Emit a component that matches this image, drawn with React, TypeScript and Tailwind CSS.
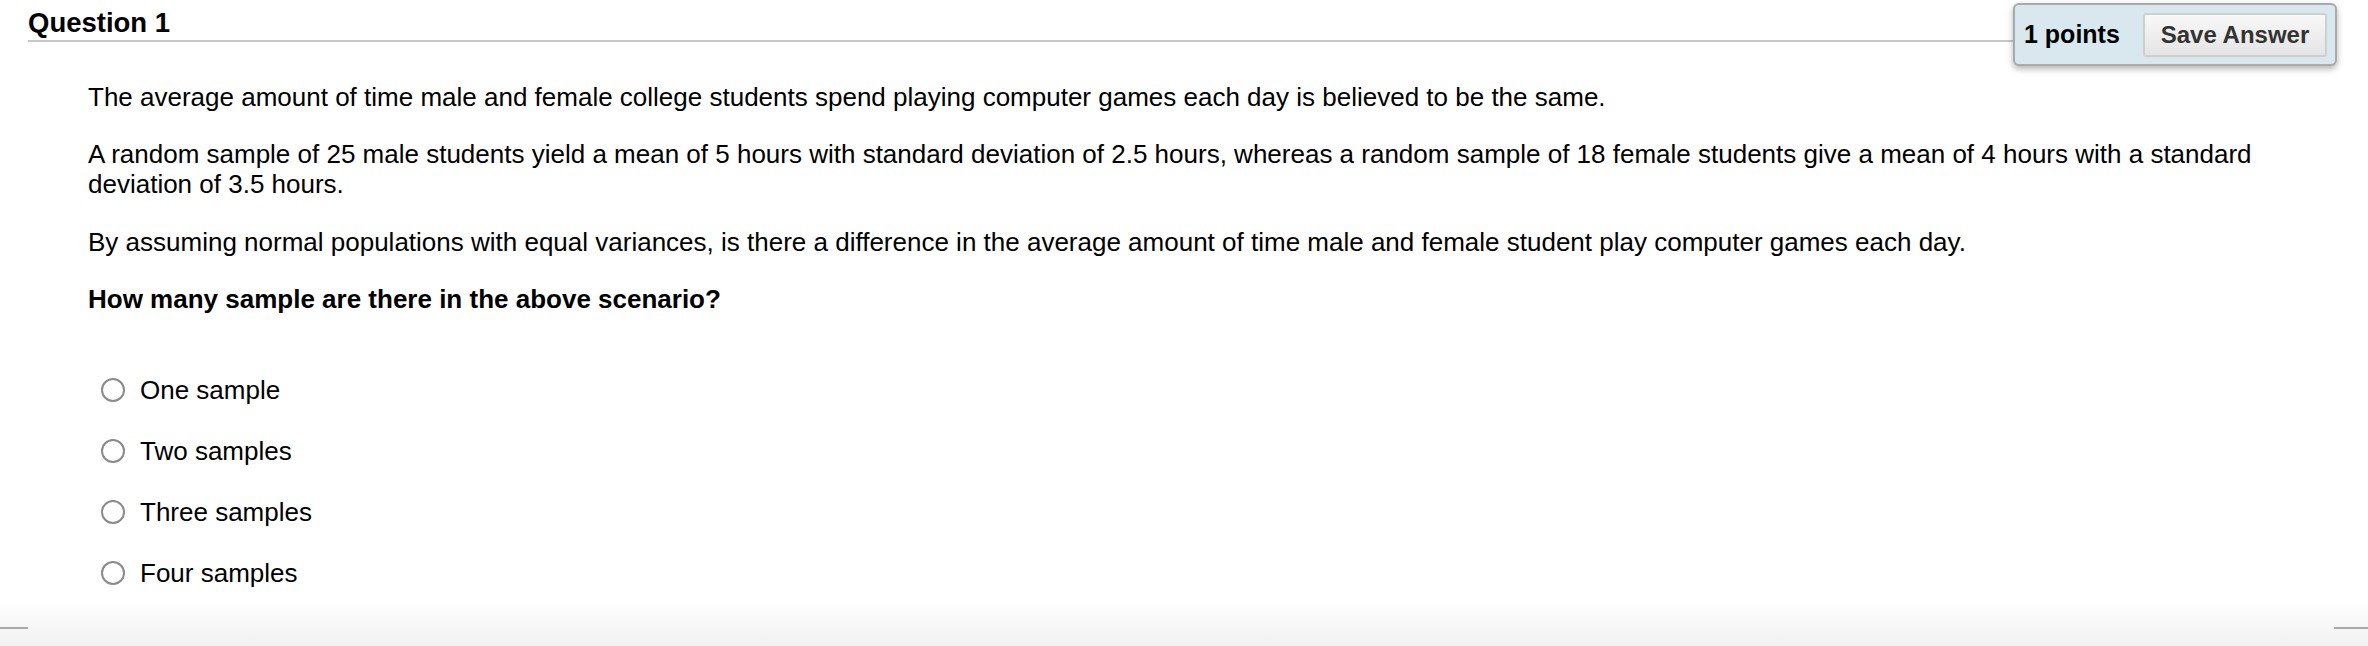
import React from 'react';

const options = ['One sample', 'Two samples', 'Three samples', 'Four samples'];

export default function App() {
  return (
    <div className="h-[646px] w-full overflow-hidden bg-white text-black font-['Liberation_Sans',Arial,sans-serif]">
      {/* header */}
      <div className="flex items-start pl-[28px] pr-[31px]">
        <div className="h-[42px] flex-1 border-b-2 border-[#c8c8c8]">
          <div className="pt-[7px] text-[27.5px] font-bold leading-[32px]">Question 1</div>
        </div>
        <div className="mt-[3px] flex h-[63px] w-[324px] items-center justify-between rounded-[6px] border-2 border-[#aaaaaa] bg-[#d8e8ee] pl-[9px] pr-[8px] shadow-[0_3px_6px_rgba(0,0,0,0.3)]">
          <span className="text-[25px] font-bold leading-none">1 points</span>
          <button className="h-[44px] w-[184px] rounded-[3px] border-2 border-[#cfcfcf] bg-gradient-to-b from-[#f8f8f8] to-[#e4e4e4] text-[24px] font-bold text-[#333]">
            Save Answer
          </button>
        </div>
      </div>

      {/* body */}
      <div className="mt-[16px] pl-[88px] pr-[104px] text-[26px] leading-[30px]">
        <p className="mb-[27px]">
          The average amount of time male and female college students spend playing computer games each day is believed to be the same.
        </p>
        <p className="mb-[28px]">
          A random sample of 25 male students yield a mean of 5 hours with standard deviation of 2.5 hours, whereas a random sample of 18 female students give a mean of 4 hours with a standard deviation of 3.5 hours.
        </p>
        <p className="mb-[27px]">
          By assuming normal populations with equal variances, is there a difference in the average amount of time male and female student play computer games each day.
        </p>
        <p className="font-bold">How many sample are there in the above scenario?</p>

        <div className="ml-[13px] mt-[61px] flex flex-col gap-[31px]">
          {options.map((o) => (
            <label key={o} className="flex h-[30px] items-center gap-[15px]">
              <span className="h-[24px] w-[24px] rounded-full border-2 border-[#8a8a8a] bg-white" />
              <span className="text-[26px]">{o}</span>
            </label>
          ))}
        </div>
      </div>

      {/* next question edge */}
      <div className="mt-[12px] flex h-[46px] justify-between bg-gradient-to-b from-white to-[#f1f1f1]">
        <div className="mt-[27px] h-[2px] w-[28px] bg-[#aaaaaa]" />
        <div className="mt-[27px] h-[2px] w-[34px] bg-[#aaaaaa]" />
      </div>
    </div>
  );
}
